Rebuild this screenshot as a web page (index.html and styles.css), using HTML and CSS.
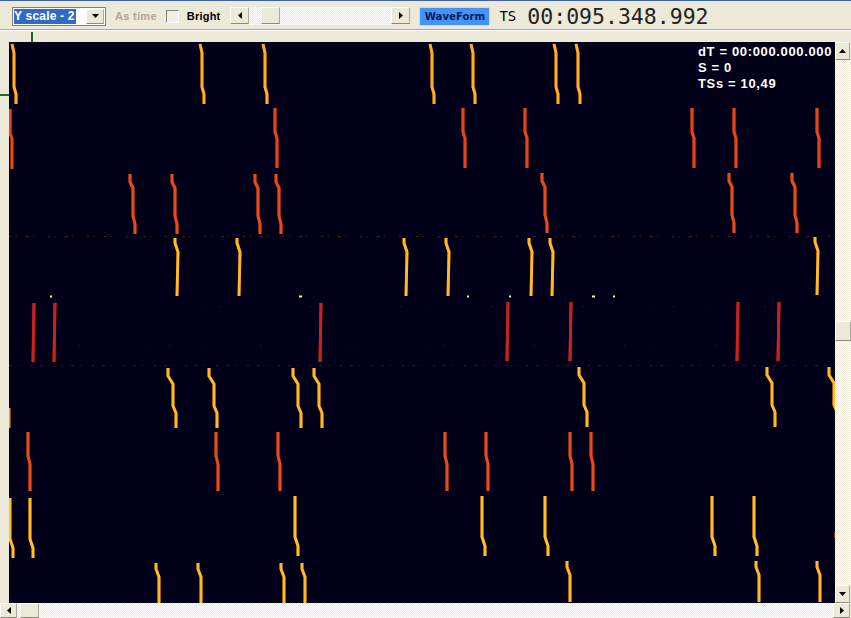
FILE: index.html
```html
<!DOCTYPE html>
<html lang="en">
<head>
  <meta charset="UTF-8">
  <title>Spike viewer</title>
  <link rel="stylesheet" href="styles.css">
</head>
<body>
  <div class="window">
    <div class="toolbar">
      <div class="combo">
        <span class="combo-text">Y scale - 2</span>
        <span class="btn arrow-btn"><svg width="7" height="4" viewBox="0 0 7 4"><path d="M0 0h7L3.5 4z"/></svg></span>
      </div>
      <span class="as-time">As time</span>
      <span class="check"></span>
      <span class="bright">Bright</span>
      <div class="hscroll top-scroll">
        <span class="btn end-btn"><svg width="4" height="7" viewBox="0 0 4 7"><path d="M4 0v7L0 3.5z"/></svg></span>
        <span class="track"><span class="btn thumb top-thumb"></span></span>
        <span class="btn end-btn"><svg width="4" height="7" viewBox="0 0 4 7"><path d="M0 0v7l4-3.5z"/></svg></span>
      </div>
      <span class="wave-btn">WaveForm</span>
      <span class="ts-label">TS</span>
      <span class="ts-value">00:095.348.992</span>
    </div>

    <div class="ruler"><span class="tick"></span></div>

    <div class="main">
      <div class="gutter"><span class="gutter-tick"></span></div>
      <div class="plot">
        <svg class="traces" width="826" height="561" viewBox="9 42 826 561">
          <defs>
            <path id="s1" d="M0 0 L2 9 V43 L4 50 V60"/>
            <path id="s2" d="M0 0 V24 L2 30 V60"/>
            <path id="s3" d="M0 0 V8 L3 14 V42 L5 50 V60"/>
            <path id="s4" d="M0 0 V5 L3 14 L2 58"/>
            <path id="s5" d="M1 0 L0 59"/>
            <path id="s6" d="M0 0 V8 L5 16 V38 L8 45 V60"/>
            <path id="s7" d="M0 0 V24 L2 32 V59"/>
            <path id="s8" d="M0 0 V41 L3 50 V60"/>
            <path id="s9" d="M0 0 V6 L3 14 V41"/>
          </defs>

          <path class="noise" d="M9 236.5H835"/>
          <path class="noise noise-two" d="M9 365.5H835"/>
          <path class="noise noise-three" d="M200 306.5H830"/>
          <path class="noise noise-three" d="M60 345.5H800"/>

          <g class="row orange">
            <use href="#s1" x="12" y="44"/><use href="#s1" x="200" y="44"/><use href="#s1" x="263" y="44"/>
            <use href="#s1" x="430" y="44"/><use href="#s1" x="471" y="44"/><use href="#s1" x="554" y="44"/>
            <use href="#s1" x="576" y="44"/>
          </g>
          <g class="row red">
            <use href="#s2" x="10" y="109"/><use href="#s2" x="275" y="108"/><use href="#s2" x="463" y="108"/>
            <use href="#s2" x="525" y="108"/><use href="#s2" x="692" y="108"/><use href="#s2" x="734" y="108"/>
            <use href="#s2" x="817" y="108"/>
          </g>
          <g class="row scarlet">
            <use href="#s3" x="130" y="174"/><use href="#s3" x="172" y="174"/><use href="#s3" x="255" y="174"/>
            <use href="#s3" x="276" y="174"/><use href="#s3" x="542" y="173"/><use href="#s3" x="729" y="173"/>
            <use href="#s3" x="792" y="173"/>
          </g>
          <g class="row amber">
            <use href="#s4" x="175" y="238"/><use href="#s4" x="237" y="238"/><use href="#s4" x="404" y="238"/>
            <use href="#s4" x="446" y="238"/><use href="#s4" x="529" y="238"/><use href="#s4" x="550" y="238"/>
            <use href="#s4" x="815" y="237"/>
          </g>
          <g class="row deep-red">
            <use href="#s5" x="33" y="303"/><use href="#s5" x="54" y="303"/><use href="#s5" x="320" y="303"/>
            <use href="#s5" x="507" y="302"/><use href="#s5" x="570" y="302"/><use href="#s5" x="737" y="302"/>
            <use href="#s5" x="778" y="302"/>
          </g>
          <g class="row amber">
            <use href="#s6" x="168" y="368"/><use href="#s6" x="209" y="368"/><use href="#s6" x="293" y="368"/>
            <use href="#s6" x="314" y="368"/><use href="#s6" x="579" y="367"/><use href="#s6" x="767" y="367"/>
            <use href="#s6" x="829" y="367"/>
          </g>
          <g class="row scarlet">
            <use href="#s7" x="28" y="432"/><use href="#s7" x="216" y="432"/><use href="#s7" x="278" y="432"/>
            <use href="#s7" x="445" y="432"/><use href="#s7" x="486" y="432"/><use href="#s7" x="570" y="432"/>
            <use href="#s7" x="591" y="432"/>
          </g>
          <g class="row yellow">
            <use href="#s8" x="10" y="498"/><use href="#s8" x="30" y="498"/><use href="#s8" x="295" y="496"/>
            <use href="#s8" x="482" y="496"/><use href="#s8" x="545" y="496"/><use href="#s8" x="712" y="496"/>
            <use href="#s8" x="754" y="496"/>
          </g>
          <g class="row amber">
            <use href="#s9" x="156" y="563"/><use href="#s9" x="198" y="563"/><use href="#s9" x="281" y="563"/>
            <use href="#s9" x="302" y="563"/><use href="#s9" x="567" y="561"/><use href="#s9" x="756" y="561"/>
            <use href="#s9" x="817" y="561"/>
          </g>

          <path class="dots" d="M50 296.5h2M299 296.5h3M467 296.5h2M509 296.5h2M592 296.5h3M613 296.5h2"/>
          <path class="edge-mark" d="M9.5 408V428"/>
          <path class="edge-red" d="M834.5 532V538"/>
        </svg>
        <div class="readout">
          <div>dT = 00:000.000.000</div>
          <div>S = 0</div>
          <div>TSs = 10,49</div>
        </div>
      </div>
      <div class="vscroll">
        <span class="btn square"><svg width="7" height="4" viewBox="0 0 7 4"><path d="M3.5 0L7 4H0z"/></svg></span>
        <span class="vtrack"><span class="btn vthumb"></span></span>
        <span class="btn square"><svg width="7" height="4" viewBox="0 0 7 4"><path d="M0 0h7L3.5 4z"/></svg></span>
      </div>
    </div>

    <div class="hscroll bottom-scroll">
      <span class="btn square"><svg width="4" height="7" viewBox="0 0 4 7"><path d="M4 0v7L0 3.5z"/></svg></span>
      <span class="track"><span class="btn thumb bottom-thumb"></span></span>
      <span class="btn square"><svg width="4" height="7" viewBox="0 0 4 7"><path d="M0 0v7l4-3.5z"/></svg></span>
    </div>
  </div>
</body>
</html>
```

FILE: styles.css
```css
/* General styles */
html, body {
  margin: 0;
  padding: 0;
}

body {
  font-family: "Liberation Sans", Arial, sans-serif;
  background-color: #ece9d8;
  color: #000;
}

.window {
  width: 851px;
  height: 618px;
  overflow: hidden;
  display: flex;
  flex-direction: column;
  background-color: #ece9d8;
}

/* Raised XP style button */
.btn {
  display: flex;
  align-items: center;
  justify-content: center;
  box-sizing: border-box;
  background-color: #ece9d8;
  border: 1px solid;
  border-color: #fff #aca899 #8c8a7c #fff;
}

/* Toolbar */
.toolbar {
  height: 30px;
  box-sizing: border-box;
  flex: none;
  display: flex;
  align-items: center;
  padding: 2px 0 0 12px;
  border-top: 1px solid #3f63a8;
  border-bottom: 1px solid #aca899;
  box-shadow: 0 1px 0 #fff;
}

.combo {
  width: 94px;
  height: 19px;
  box-sizing: border-box;
  display: flex;
  align-items: center;
  justify-content: space-between;
  padding: 1px;
  background: #fff;
  border: 1px solid #7f7f7f;
  font-size: 12px;
  font-weight: bold;
  letter-spacing: 0.2px;
}

.combo-text {
  background-color: #316ac5;
  color: #fff;
  width: 62px;
  height: 15px;
  line-height: 15px;
  white-space: nowrap;
  overflow: hidden;
}

.arrow-btn {
  width: 18px;
  height: 15px;
}

.as-time {
  margin-left: 9px;
  font-size: 11px;
  font-weight: bold;
  color: #aca899;
  letter-spacing: 0.3px;
}

.check {
  width: 11px;
  height: 11px;
  margin-left: 9px;
  background: #f2f0e4;
  border: 1px solid;
  border-color: #808080 #fff #fff #808080;
}

.bright {
  margin-left: 8px;
  font-size: 11px;
  font-weight: bold;
  letter-spacing: 0.2px;
}

.hscroll {
  display: flex;
}

.top-scroll {
  width: 180px;
  height: 18px;
  margin-left: 10px;
}

.end-btn {
  width: 19px;
  height: 17px;
  flex: none;
}

.track {
  flex: 1;
  display: flex;
  background-color: #f5f4ed;
  background-image: repeating-conic-gradient(#ece9d8 0 25%, #fff 0 50%);
  background-size: 2px 2px;
}

.thumb {
  height: 100%;
}

.top-thumb {
  width: 19px;
  margin-left: 12px;
  height: 17px;
}

.wave-btn {
  width: 71px;
  height: 19px;
  margin-left: 9px;
  box-sizing: border-box;
  display: flex;
  align-items: center;
  justify-content: center;
  background-color: #4493f5;
  border: 1px solid #dcd9c8;
  color: #001a66;
  font-family: "DejaVu Sans", sans-serif;
  font-size: 10.2px;
  font-weight: bold;
}

.ts-label {
  margin-left: 9px;
  font-family: "DejaVu Sans Mono", monospace;
  font-size: 14px;
}

.ts-value {
  margin-left: 11px;
  font-family: "DejaVu Sans Mono", monospace;
  font-size: 21.5px;
  color: #222;
  white-space: nowrap;
}

/* Ruler strip */
.ruler {
  height: 12px;
  flex: none;
  position: relative;
}

.tick {
  position: absolute;
  left: 31px;
  top: 2px;
  width: 2px;
  height: 10px;
  background: #1d6b2c;
}

/* Plot area */
.main {
  flex: 1;
  display: flex;
  min-height: 0;
}

.gutter {
  width: 9px;
  flex: none;
  position: relative;
}

.gutter-tick {
  position: absolute;
  left: 0;
  top: 52px;
  width: 9px;
  height: 2px;
  background: #1d6b2c;
}

.plot {
  width: 826px;
  flex: none;
  position: relative;
  background-color: #000019;
}

.traces {
  display: block;
}

.row {
  fill: none;
  stroke-width: 2.9;
  stroke-linejoin: round;
  filter: drop-shadow(0 0 0.7px rgba(190, 50, 10, 0.9));
}

.orange { stroke: #ffb023; }
.amber { stroke: #ffbc22; }
.yellow { stroke: #ffc21f; }
.red { stroke: #e8431a; }
.scarlet { stroke: #ea4a1a; }
.deep-red { stroke: #cc2020; }

.noise {
  fill: none;
  stroke: #4a2014;
  stroke-width: 1;
  stroke-dasharray: 2 5 1 9 3 4 1 14;
}

.noise-two {
  stroke: #3c1614;
  stroke-dasharray: 3 6 1 11 2 8;
}

.noise-three {
  stroke: #24101c;
  stroke-dasharray: 1 17 2 29 1 41;
}

.dots {
  fill: none;
  stroke: #ffeeaa;
  stroke-width: 2;
}

.edge-mark {
  fill: none;
  stroke: #ff9a20;
  stroke-width: 2;
}

.edge-red {
  fill: none;
  stroke: #a02018;
  stroke-width: 1;
}

.readout {
  position: absolute;
  top: 2px;
  right: 3px;
  width: 134px;
  color: #fff;
  font-size: 13px;
  font-weight: bold;
  letter-spacing: 0.65px;
  line-height: 16px;
  white-space: nowrap;
}

/* Scrollbars */
.vscroll {
  width: 16px;
  flex: none;
  display: flex;
  flex-direction: column;
}

.vscroll .square {
  width: 15px;
  height: 18px;
  flex: none;
}

.vtrack {
  flex: 1;
  background-image: repeating-conic-gradient(#ece9d8 0 25%, #fff 0 50%);
  background-size: 2px 2px;
}

.vthumb {
  width: 16px;
  height: 20px;
  margin-top: 261px;
}

.bottom-scroll {
  height: 15px;
  flex: none;
  padding-right: 1px;
}

.bottom-scroll .square {
  width: 17px;
  flex: none;
}

.bottom-thumb {
  width: 19px;
  margin-left: 3px;
}
```
